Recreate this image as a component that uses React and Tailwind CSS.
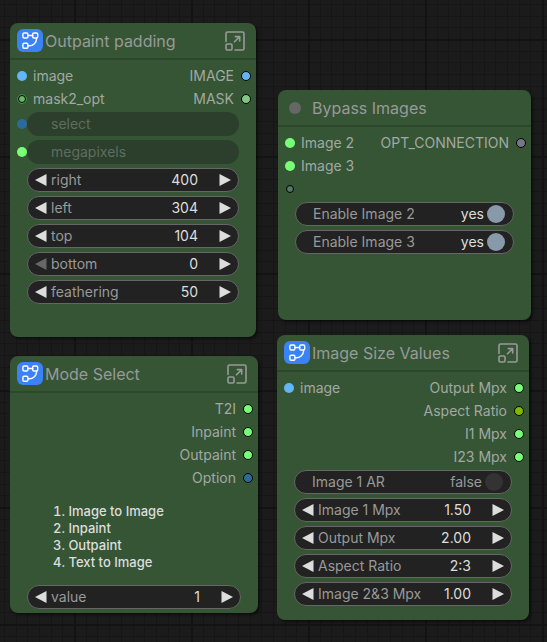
import React, { useState } from 'react';
import clsx from 'clsx';

const GRID_STEPS = [12, 23, 35, 47, 59, 70, 82, 94, 105];

const CanvasGrid = () => (
  <svg className="absolute inset-0 h-full w-full" aria-hidden="true">
    <defs>
      <pattern id="grid" x="74" y="39" width="117" height="117" patternUnits="userSpaceOnUse">
        {GRID_STEPS.map((p) => (
          <g key={p} fill="#161616">
            <rect x={p} y="0" width="1" height="117" />
            <rect x="0" y={p} width="117" height="1" />
          </g>
        ))}
        <rect width="2" height="117" fill="#131313" />
        <rect width="117" height="2" fill="#131313" />
      </pattern>
    </defs>
    <rect width="100%" height="100%" fill="url(#grid)" />
  </svg>
);

const SubgraphIcon = () => (
  <span className="flex h-[23px] w-[26px] shrink-0 rounded-md bg-[#3b82f6]">
    <svg
      viewBox="0 0 26 23"
      className="h-full w-full"
      fill="none"
      stroke="white"
      strokeWidth="1.4"
      strokeLinecap="round"
      aria-hidden="true"
    >
      <rect x="5.9" y="4" width="5" height="5" rx="1.2" />
      <rect x="15.7" y="4" width="5" height="5" rx="1.2" />
      <rect x="5.9" y="14.2" width="5" height="5" rx="1.2" />
      <path d="M10.9 6.5h4.8M19.6 9v.6c0 4-3.4 7.1-7.4 7.1h-1.3" />
    </svg>
  </span>
);

const ExpandIcon = () => (
  <svg
    viewBox="0 0 20 20"
    className="size-5"
    fill="none"
    stroke="currentColor"
    strokeWidth="1.6"
    strokeLinecap="round"
    strokeLinejoin="round"
    aria-hidden="true"
  >
    <path d="M1 10.5V2.6C1 1.7 1.7 1 2.6 1h14.8c.9 0 1.6.7 1.6 1.6v14.8c0 .9-.7 1.6-1.6 1.6H10" />
    <rect x="1" y="13" width="6" height="6" rx="1.2" />
    <path d="M9.5 10.8l5-5M10.3 5.6h4.4V10" />
  </svg>
);

const Node = ({ title, subgraph, className, children }) => (
  <section
    className={clsx(
      'absolute flex flex-col rounded-lg bg-[#355535] shadow-[2px_2px_3px_rgba(0,0,0,0.5)]',
      className
    )}
  >
    <header className="flex h-[37px] items-center border-b-2 border-[#2c472c] pl-[7px] pr-[11px] text-[#999]">
      {subgraph ? <SubgraphIcon /> : <span className="ml-1 mr-[9px] size-3 rounded-full bg-[#666]" />}
      <h2 className="ml-[2px] flex-1 whitespace-nowrap text-[16px] leading-6">{title}</h2>
      {subgraph && (
        <button type="button" aria-label={`Open ${title}`}>
          <ExpandIcon />
        </button>
      )}
    </header>
    <div className="flex flex-1 flex-col pt-1">{children}</div>
  </section>
);

const Dot = ({ color, out, small }) => (
  <span
    className={clsx(
      'shrink-0 rounded-full',
      small ? 'mx-px size-2 border-[1px] border-black' : 'size-[10px]',
      small === 'ring' && 'outline outline-[#3f8a42]',
      out && 'border border-black',
      color
    )}
  />
);

const SlotRow = ({ input, output }) => (
  <div className="flex h-[23px] items-center justify-between pl-[7px] pr-[5px] text-[14px] leading-5 text-[#a3a8a3]">
    <div className="flex items-center gap-[6px]">
      {input && (
        <>
          <Dot color={input.color} small={input.small} />
          <span>{input.name}</span>
        </>
      )}
    </div>
    {output && (
      <div className="flex items-center gap-[7px]">
        <span>{output.name}</span>
        <Dot color={output.color} out />
      </div>
    )}
  </div>
);

const Widgets = ({ children }) => (
  <div className="mt-[2px] flex flex-col gap-1 px-[17px] text-[14px] leading-5">{children}</div>
);

// Widget whose value comes from a connected input
const LinkedWidget = ({ name, color }) => (
  <div className="relative flex h-6 items-center rounded-full bg-[#2c3e2c] pl-6 text-[#5f6d5f]">
    <span className={clsx('absolute -left-[10px] top-[7px] size-[10px] rounded-full', color)} />
    {name}
  </div>
);

const Arrow = ({ left, disabled }) => (
  <svg
    viewBox="0 0 12 12"
    className={clsx('size-3', disabled ? 'text-[#666]' : 'text-[#ddd]')}
    fill="currentColor"
    aria-hidden="true"
  >
    <path d={left ? 'M11.5 0v12L0 6z' : 'M.5 0v12L12 6z'} />
  </svg>
);

const StepperWidget = ({ name, initial, step = 1, digits = 0, min = 0, options }) => {
  const [value, setValue] = useState(initial);
  const id = name.replace(/\W+/g, '-').toLowerCase();
  const atMin = !options && Number(value) <= min;

  const change = (dir) => {
    if (options) {
      const next = options.indexOf(value) + dir;
      setValue(options[(next + options.length) % options.length]);
    } else {
      setValue(Math.max(min, Number(value) + dir * step).toFixed(digits));
    }
  };

  return (
    <div className="flex h-6 items-center rounded-full border border-[#666] bg-[#222] px-[7px]">
      <button type="button" aria-label={`Decrease ${name}`} disabled={atMin} onClick={() => change(-1)}>
        <Arrow left disabled={atMin} />
      </button>
      <label htmlFor={id} className="ml-1 whitespace-nowrap text-[#999]">{name}</label>
      <input
        id={id}
        type="text"
        value={value}
        onChange={(e) => setValue(e.target.value)}
        className="mr-[21px] min-w-0 flex-1 bg-transparent text-right text-[#ddd] outline-none"
      />
      <button type="button" aria-label={`Increase ${name}`} onClick={() => change(1)}>
        <Arrow />
      </button>
    </div>
  );
};

const ToggleWidget = ({ name, initial, on, off }) => {
  const [checked, setChecked] = useState(initial);

  return (
    <label className="flex h-6 items-center rounded-full border border-[#666] bg-[#222] pl-[17px] pr-2 text-[#999]">
      <span className="flex-1">{name}</span>
      <span className={clsx('mr-[3px]', checked && 'text-[#ddd]')}>{checked ? on : off}</span>
      <input
        type="checkbox"
        checked={checked}
        onChange={(e) => setChecked(e.target.checked)}
        className="size-[18px] appearance-none rounded-full bg-[#333] checked:bg-[#8899aa]"
      />
    </label>
  );
};

const App = () => (
  <main className="relative min-h-screen overflow-hidden bg-[#1b1b1b] font-['Inter',sans-serif]">
    <CanvasGrid />

    <Node title="Outpaint padding" subgraph className="left-[10px] top-[23px] min-h-[314px] w-[246px]">
      <SlotRow
        input={{ name: 'image', color: 'bg-[#64b5f6]' }}
        output={{ name: 'IMAGE', color: 'bg-[#64b5f6]' }}
      />
      <SlotRow
        input={{ name: 'mask2_opt', color: 'bg-[#66bb6a]', small: 'ring' }}
        output={{ name: 'MASK', color: 'bg-[#81c784]' }}
      />
      <Widgets>
        <LinkedWidget name="select" color="bg-[#2b6a9b]" />
        <LinkedWidget name="megapixels" color="bg-[#77ff77]" />
        <StepperWidget name="right" initial="400" step={8} />
        <StepperWidget name="left" initial="304" step={8} />
        <StepperWidget name="top" initial="104" step={8} />
        <StepperWidget name="bottom" initial="0" step={8} />
        <StepperWidget name="feathering" initial="50" />
      </Widgets>
    </Node>

    <Node title="Bypass Images" className="left-[278px] top-[90px] min-h-[230px] w-[253px]">
      <SlotRow
        input={{ name: 'Image 2', color: 'bg-[#77ff77]' }}
        output={{ name: 'OPT_CONNECTION', color: 'bg-[#778]' }}
      />
      <SlotRow input={{ name: 'Image 3', color: 'bg-[#77ff77]' }} />
      <SlotRow input={{ name: '', color: 'bg-[#557766]', small: true }} />
      <Widgets>
        <ToggleWidget name="Enable Image 2" initial={true} on="yes" off="no" />
        <ToggleWidget name="Enable Image 3" initial={true} on="yes" off="no" />
      </Widgets>
    </Node>

    <Node title="Mode Select" subgraph className="left-[10px] top-[356px] min-h-[257px] w-[248px]">
      <SlotRow output={{ name: 'T2I', color: 'bg-[#77ff77]' }} />
      <SlotRow output={{ name: 'Inpaint', color: 'bg-[#77ff77]' }} />
      <SlotRow output={{ name: 'Outpaint', color: 'bg-[#77ff77]' }} />
      <SlotRow output={{ name: 'Option', color: 'bg-[#2b6a9b]' }} />
      <ol className="mb-2 mt-[14px] flex-1 list-inside list-decimal pl-[43px] text-[13px] font-medium leading-[17px] text-[#ddd]">
        <li>Image to Image</li>
        <li>Inpaint</li>
        <li>Outpaint</li>
        <li>Text to Image</li>
      </ol>
      <div className="pb-1">
        <Widgets>
          <StepperWidget name="value" initial="1" />
        </Widgets>
      </div>
    </Node>

    <Node title="Image Size Values" subgraph className="left-[277px] top-[335px] min-h-[285px] w-[252px]">
      <SlotRow
        input={{ name: 'image', color: 'bg-[#64b5f6]' }}
        output={{ name: 'Output Mpx', color: 'bg-[#77ff77]' }}
      />
      <SlotRow output={{ name: 'Aspect Ratio', color: 'bg-[#7fb800]' }} />
      <SlotRow output={{ name: 'I1 Mpx', color: 'bg-[#77ff77]' }} />
      <SlotRow output={{ name: 'I23 Mpx', color: 'bg-[#77ff77]' }} />
      <Widgets>
        <ToggleWidget name="Image 1 AR" initial={false} on="true" off="false" />
        <StepperWidget name="Image 1 Mpx" initial="1.50" step={0.5} digits={2} />
        <StepperWidget name="Output Mpx" initial="2.00" step={0.5} digits={2} />
        <StepperWidget name="Aspect Ratio" initial="2:3" options={['1:1', '2:3', '3:4', '16:9']} />
        <StepperWidget name="Image 2&3 Mpx" initial="1.00" step={0.5} digits={2} />
      </Widgets>
    </Node>
  </main>
);

export default App;
